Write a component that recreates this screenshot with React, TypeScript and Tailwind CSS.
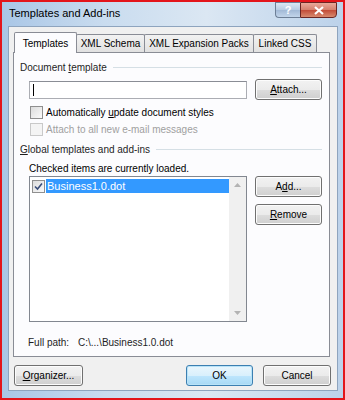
const font = { fontFamily: '"Liberation Sans", Arial, sans-serif' };

const Btn = ({ label, u, w, primary }: { label: string; u?: number; w: string; primary?: boolean }) => {
  const text =
    u === undefined ? (
      label
    ) : (
      <>
        {label.slice(0, u)}
        <span className="underline">{label[u]}</span>
        {label.slice(u + 1)}
      </>
    );
  return (
    <div
      className={`${w} flex h-[21px] items-center justify-center rounded-[3px] border text-[10px] leading-[13px] text-black ${
        primary
          ? "border-[#3c7fb1] bg-[linear-gradient(#eaf6fd_0%,#d9f0fc_50%,#bee6fd_51%,#a7d9f5_100%)] shadow-[inset_0_0_0_1px_#b8e3f8]"
          : "border-[#707070] bg-[linear-gradient(#f2f2f2_0%,#ebebeb_50%,#dddddd_51%,#cfcfcf_100%)] shadow-[inset_0_0_0_1px_#fcfcfc]"
      }`}
    >
      <span>{text}</span>
    </div>
  );
};

const Check = ({ checked, disabled }: { checked?: boolean; disabled?: boolean }) => (
  <div
    className={`flex h-[13px] w-[13px] shrink-0 items-center justify-center border ${
      disabled ? "border-[#c9c9c9] bg-[#f4f4f4]" : "border-[#8f8f8f] bg-[linear-gradient(135deg,#dcdcdc,#fafafa)]"
    }`}
  >
    {checked && (
      <svg width="9" height="9" viewBox="0 0 9 9">
        <path d="M1 4.5 L3.5 7 L8 1.5" fill="none" stroke="#3a4d79" strokeWidth="1.6" />
      </svg>
    )}
  </div>
);

const GroupLabel = ({ children }: { children: React.ReactNode }) => (
  <div className="flex h-[13px] items-center gap-[6px] pr-[7px]">
    <span className="whitespace-nowrap text-[#1e1e1e]">{children}</span>
    <div className="h-px flex-1 bg-[#d5dfe5]" />
  </div>
);

const Tab = ({ label, w, active }: { label: string; w: string; active?: boolean }) =>
  active ? (
    <div
      className={`${w} relative z-10 -mb-px flex h-[21px] items-center justify-center whitespace-nowrap rounded-t-[2px] border border-b-0 border-[#898c95] bg-[#fcfcfe] text-[10px] leading-[13px]`}
    >
      {label}
    </div>
  ) : (
    <div
      className={`${w} -ml-px flex h-[18px] items-center justify-center whitespace-nowrap rounded-t-[2px] border border-b-0 border-[#898c95] bg-[linear-gradient(#f2f2f2,#e1e1e1)] text-[10px] leading-[13px]`}
    >
      {label}
    </div>
  );

export default function App() {
  return (
    <div style={font} className="h-[400px] w-[345px] overflow-hidden border-2 border-[#e3151b] bg-white">
      <div className="flex h-full flex-col bg-[linear-gradient(90deg,#a9c6e6,#c9dcef_30%,#dbe7f3_60%,#bcd2ea)] pb-[7px] pl-[6px] pr-[5px]">
        {/* title bar */}
        <div className="flex h-[24px] items-start justify-between">
          <span className="mt-[5px] pl-[1px] text-[11px] leading-[13px] text-black">Templates and Add-ins</span>
          <div className="flex pr-[1px]">
            <div className="flex h-[16px] w-[25px] items-center justify-center rounded-bl-[4px] border border-r-0 border-[#6d7f96] bg-[linear-gradient(#dbe7f3,#b7cbe2_50%,#a2b9d6_51%,#c2d5ea)] text-[11px] font-bold leading-none text-white">
              ?
            </div>
            <div className="flex h-[16px] w-[37px] items-center justify-center rounded-br-[4px] border border-[#6b2623] bg-[linear-gradient(#e9a99a,#d47f6c_50%,#c24b37_51%,#d88a6e)]">
              <svg width="10" height="9" viewBox="0 0 10 9">
                <path d="M1 1 L9 8 M9 1 L1 8" stroke="white" strokeWidth="2.2" />
              </svg>
            </div>
          </div>
        </div>
        {/* client */}
        <div className="flex flex-1 flex-col border border-[#8ea4be] bg-[#f0f0f0] px-[4px] pt-[5px]">
          <div className="flex items-end pl-[1px]">
            <Tab label="Templates" w="w-[63px]" active />
            <Tab label="XML Schema" w="w-[69px]" />
            <Tab label="XML Expansion Packs" w="w-[110px]" />
            <Tab label="Linked CSS" w="w-[64px]" />
          </div>
          <div className="flex h-[305px] w-[317px] flex-col border border-[#898c95] bg-[#fcfcfe] pl-[6px] pt-[8px] text-[10px] leading-[13px] text-black">
            <GroupLabel>
              Document <span className="underline">t</span>emplate
            </GroupLabel>
            <div className="mt-[5px] flex items-center gap-[8px] pl-[9px]">
              <div className="flex h-[18px] w-[218px] items-center border border-[#abadb3] border-t-[#8a8d95] bg-white pl-[3px]">
                <div className="h-[12px] w-px bg-black" />
              </div>
              <Btn label="Attach..." u={0} w="w-[67px]" />
            </div>
            <div className="mt-[6px] flex items-center gap-[3px] pl-[10px]">
              <Check />
              <span>
                Automatically <span className="underline">u</span>pdate document styles
              </span>
            </div>
            <div className="mt-[4px] flex items-center gap-[3px] pl-[10px] text-[#a0a0a0]">
              <Check disabled />
              <span>Attach to all new e-mail messages</span>
            </div>
            <div className="mt-[7px]">
              <GroupLabel>
                <span className="underline">G</span>lobal templates and add-ins
              </GroupLabel>
            </div>
            <div className="mt-[6px] pl-[9px]">Checked items are currently loaded.</div>
            <div className="mt-[1px] flex items-start gap-[8px] pl-[9px]">
              <div className="flex h-[146px] w-[218px] border border-[#828790] bg-white">
                <div className="flex-1 pl-[2px] pt-[2px]">
                  <div className="flex items-center gap-[1px]">
                    <Check checked />
                    <div className="flex h-[14px] flex-1 items-center bg-[#3399ff] px-[1px] text-[11px] text-white">
                      Business1.0.dot
                    </div>
                  </div>
                </div>
                <div className="flex w-[17px] flex-col items-center justify-between bg-[#f0f0f0] py-[6px]">
                  <svg width="7" height="4" viewBox="0 0 7 4">
                    <path d="M0 4 L3.5 0 L7 4 Z" fill="#b3b3b3" />
                  </svg>
                  <svg width="7" height="4" viewBox="0 0 7 4">
                    <path d="M0 0 L3.5 4 L7 0 Z" fill="#b3b3b3" />
                  </svg>
                </div>
              </div>
              <div className="flex flex-col gap-[7px]">
                <Btn label="Add..." u={1} w="w-[67px]" />
                <Btn label="Remove" u={0} w="w-[67px]" />
              </div>
            </div>
            <div className="mt-[14px] flex pl-[8px] text-[#1e1e1e]">
              <span className="w-[50px]">Full path:</span>
              <span>C:\...\Business1.0.dot</span>
            </div>
          </div>
          <div className="mt-[8px] flex items-center justify-between pl-[1px] pr-[2px]">
            <Btn label="Organizer..." u={0} w="w-[69px]" />
            <div className="flex gap-[10px]">
              <Btn label="OK" w="w-[67px]" primary />
              <Btn label="Cancel" w="w-[68px]" />
            </div>
          </div>
        </div>
      </div>
    </div>
  );
}
